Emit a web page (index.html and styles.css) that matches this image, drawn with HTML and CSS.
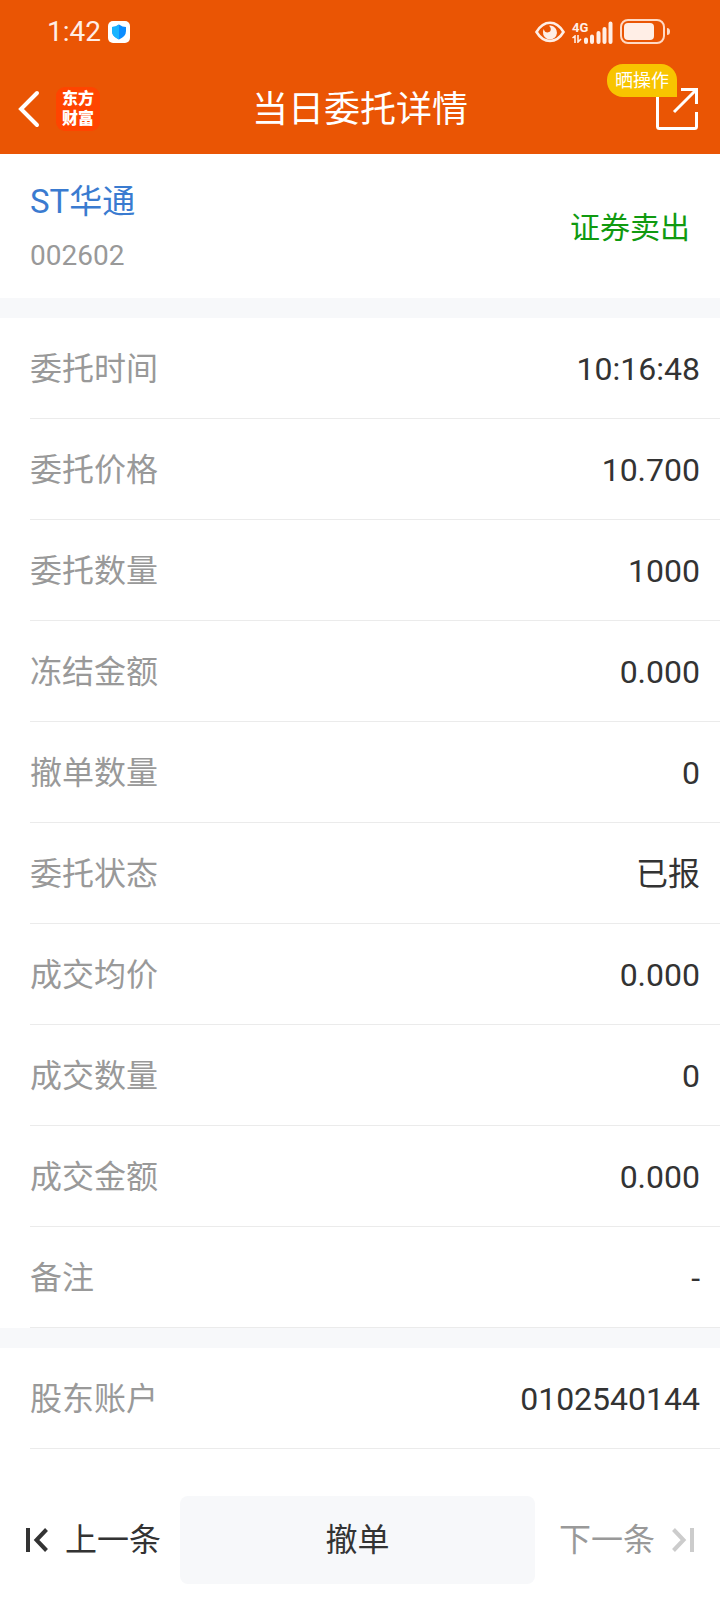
FILE: index.html
```html
<!DOCTYPE html>
<html lang="zh-CN">
<head>
    <meta charset="UTF-8">
    <meta name="viewport" content="width=device-width, initial-scale=1.0">
    <title>当日委托详情</title>
    <link rel="stylesheet" href="styles.css">
</head>
<body>
    <header class="header">
        <!-- 状态栏 -->
        <div class="status-bar">
            <span class="clock">1:42</span>
            <svg class="shield" width="22" height="22" viewBox="0 0 22 22">
                <rect width="22" height="22" rx="5" fill="#fff"/>
                <path d="M11 3.5 Q14.5 6 18 6 V10 Q18 15.500 11 18.500 Q4 15.500 4 10 V6 Q7.500 6 11 3.500Z" fill="#0a8cff"/>
                <path d="M11 3.500 Q7.500 6 4 6 V10 Q4 15.500 11 18.500Z" fill="#18b4ff"/>
            </svg>
            <div class="status-icons">
                <svg width="30" height="22" viewBox="0 0 30 22">
                    <path d="M1.500 11 Q7 1.800 15 1.800 T28.500 11 Q23 20 15 20 T1.500 11Z" fill="none" stroke="#ffeee6" stroke-width="2.600"/>
                    <path d="M15.500 4.500 A7 7 0 1 1 8 11 Q8 9.500 8.800 8 Q9.500 11.500 12.500 11.500 Q16 11 15.800 8 Q15.600 6 14 4.700Z" fill="#ffeee6"/>
                </svg>
                <div class="network">
                    <span>4G</span>
                    <svg width="10" height="8" viewBox="0 0 10 8">
                        <path d="M0.500 3 L3 1 V8 M6 0 V7 L9 4" fill="none" stroke="#ffeee6" stroke-width="1.600"/>
                    </svg>
                </div>
                <svg class="signal" width="29" height="23" viewBox="0 0 29 23" stroke="#ffeee6" stroke-width="4" stroke-linecap="round">
                    <path d="M2 18.500 V21 M8 15.500 V21 M14.500 12 V21 M20.500 8 V21 M26.500 2.500 V21"/>
                </svg>
                <svg width="50" height="26" viewBox="0 0 50 26">
                    <rect x="1" y="1" width="43" height="23" rx="7" fill="none" stroke="#ffd9c4" stroke-width="2"/>
                    <rect x="4" y="4" width="30" height="17" rx="4" fill="#ffeee6"/>
                    <path d="M47 9 Q50 9 50 12.500 T47 16Z" fill="#ffd9c4"/>
                </svg>
            </div>
        </div>

        <!-- 导航栏 -->
        <div class="nav-bar">
            <div class="nav-left">
                <button class="back" type="button" aria-label="返回">
                    <svg width="22" height="38" viewBox="0 0 22 38">
                        <path d="M19 3 L3 19 L19 35" fill="none" stroke="#fff" stroke-width="4" stroke-linecap="round"/>
                    </svg>
                </button>
                <div class="logo">东方<br>财富</div>
            </div>
            <h1>当日委托详情</h1>
            <button class="share" type="button" aria-label="晒操作">
                <svg width="42" height="42" viewBox="0 0 42 42" fill="none" stroke="#fff" stroke-width="3">
                    <path d="M1.500 6 V38.500 Q1.500 40.500 3.500 40.500 H38.500 Q40.500 40.500 40.500 38.500 V24"/>
                    <path d="M25 1.500 H40.500 V16 M40 2 L18 24"/>
                </svg>
                <span class="share-tip">晒操作</span>
            </button>
        </div>
    </header>

    <main>
        <section class="stock">
            <div>
                <a class="stock-name" href="#">ST华通</a>
                <div class="stock-code">002602</div>
            </div>
            <div class="direction">证券卖出</div>
        </section>

        <dl class="detail">
            <div class="row"><dt>委托时间</dt><dd>10:16:48</dd></div>
            <div class="row"><dt>委托价格</dt><dd>10.700</dd></div>
            <div class="row"><dt>委托数量</dt><dd>1000</dd></div>
            <div class="row"><dt>冻结金额</dt><dd>0.000</dd></div>
            <div class="row"><dt>撤单数量</dt><dd>0</dd></div>
            <div class="row"><dt>委托状态</dt><dd>已报</dd></div>
            <div class="row"><dt>成交均价</dt><dd>0.000</dd></div>
            <div class="row"><dt>成交数量</dt><dd>0</dd></div>
            <div class="row"><dt>成交金额</dt><dd>0.000</dd></div>
            <div class="row"><dt>备注</dt><dd>-</dd></div>
        </dl>

        <dl class="detail">
            <div class="row"><dt>股东账户</dt><dd>0102540144</dd></div>
        </dl>
    </main>

    <!-- 底部操作 -->
    <footer class="footer">
        <button class="step prev" type="button">
            <svg width="22" height="24" viewBox="0 0 22 24" fill="none" stroke="#333" stroke-width="4">
                <path d="M2 0 V24 M20.500 1.500 L10.500 12 L20.500 22.500"/>
            </svg>
            上一条
        </button>
        <button class="cancel" type="button">撤单</button>
        <button class="step next" type="button" disabled>
            下一条
            <svg width="22" height="24" viewBox="0 0 22 24" fill="none" stroke="#ccc" stroke-width="4">
                <path d="M20 0 V24 M1.500 1.500 L11.500 12 L1.500 22.500"/>
            </svg>
        </button>
    </footer>
</body>
</html>
```

FILE: styles.css
```css
* {
    box-sizing: border-box;
}
body {
    margin: 0;
    min-height: 100vh;
    display: flex;
    flex-direction: column;
    background: #fff;
    color: #333;
    font-family: Roboto, "Noto Sans CJK SC", sans-serif;
    font-size: 32px;
    line-height: 48px;
}
button {
    padding: 0;
    border: none;
    background: none;
    color: inherit;
    font: inherit;
}
svg {
    display: block;
    flex: none;
}

.header {
    background: #ea5504;
    color: #fff;
}
.status-bar {
    display: flex;
    align-items: center;
    height: 64px;
    padding: 0 50px 0 47px;
}
.clock {
    color: #ffeee6;
    font-size: 28px;
}
.shield {
    margin-left: 7px;
}
.status-icons {
    display: flex;
    align-items: center;
    gap: 7px;
    margin-left: auto;
}
.network {
    width: 17px;
    color: #ffeee6;
    font-size: 13px;
    font-weight: bold;
    line-height: 14px;
}
.signal {
    margin-left: -12px;
}

.nav-bar {
    display: grid;
    grid-template-columns: 1fr auto 1fr;
    align-items: center;
    height: 90px;
    padding: 0 18px;
}
.nav-left {
    display: flex;
    align-items: center;
    gap: 16px;
}
.logo {
    width: 44px;
    height: 44px;
    padding: 2px 0;
    border-radius: 9px;
    background: #ff4400;
    font-size: 16px;
    font-weight: 900;
    line-height: 20px;
    text-align: center;
}
h1 {
    margin: 0;
    padding-top: 2px;
    font-size: 36px;
    font-weight: normal;
}
.share {
    position: relative;
    justify-self: end;
    margin-right: 4px;
}
.share-tip {
    position: absolute;
    right: 21px;
    bottom: 33px;
    width: 70px;
    border-radius: 16px 16px 0 16px;
    background: #f8c400;
    font-size: 18px;
    line-height: 33px;
    text-align: center;
    white-space: nowrap;
}

.stock {
    display: flex;
    align-items: center;
    justify-content: space-between;
    padding: 20px 30px 16px;
}
.stock-name {
    display: block;
    color: #3a7bd0;
    font-size: 33px;
    line-height: 56px;
    text-decoration: none;
}
.stock-code {
    color: #999;
    font-size: 28px;
    line-height: 52px;
}
.direction {
    color: #109a10;
    font-size: 30px;
}

.detail {
    margin: 0;
    border-top: 20px solid #f7f8fa;
}
.row {
    display: flex;
    align-items: center;
    justify-content: space-between;
    height: 101px;
    padding: 0 20px 0 30px;
    background: linear-gradient(#ebebeb, #ebebeb) 30px 100% / 100% 1px no-repeat;
}
dt {
    color: #999;
}
dd {
    margin: 0;
}

.footer {
    display: grid;
    grid-template-columns: 180px 1fr 185px;
    margin-top: auto;
    padding: 47px 0 16px;
}
.step {
    display: flex;
    align-items: center;
    gap: 17px;
}
.prev {
    padding-left: 26px;
}
.next {
    justify-content: flex-end;
    padding-right: 26px;
    color: #999;
}
.cancel {
    height: 88px;
    border-radius: 8px;
    background: #f7f8fa;
}
```
